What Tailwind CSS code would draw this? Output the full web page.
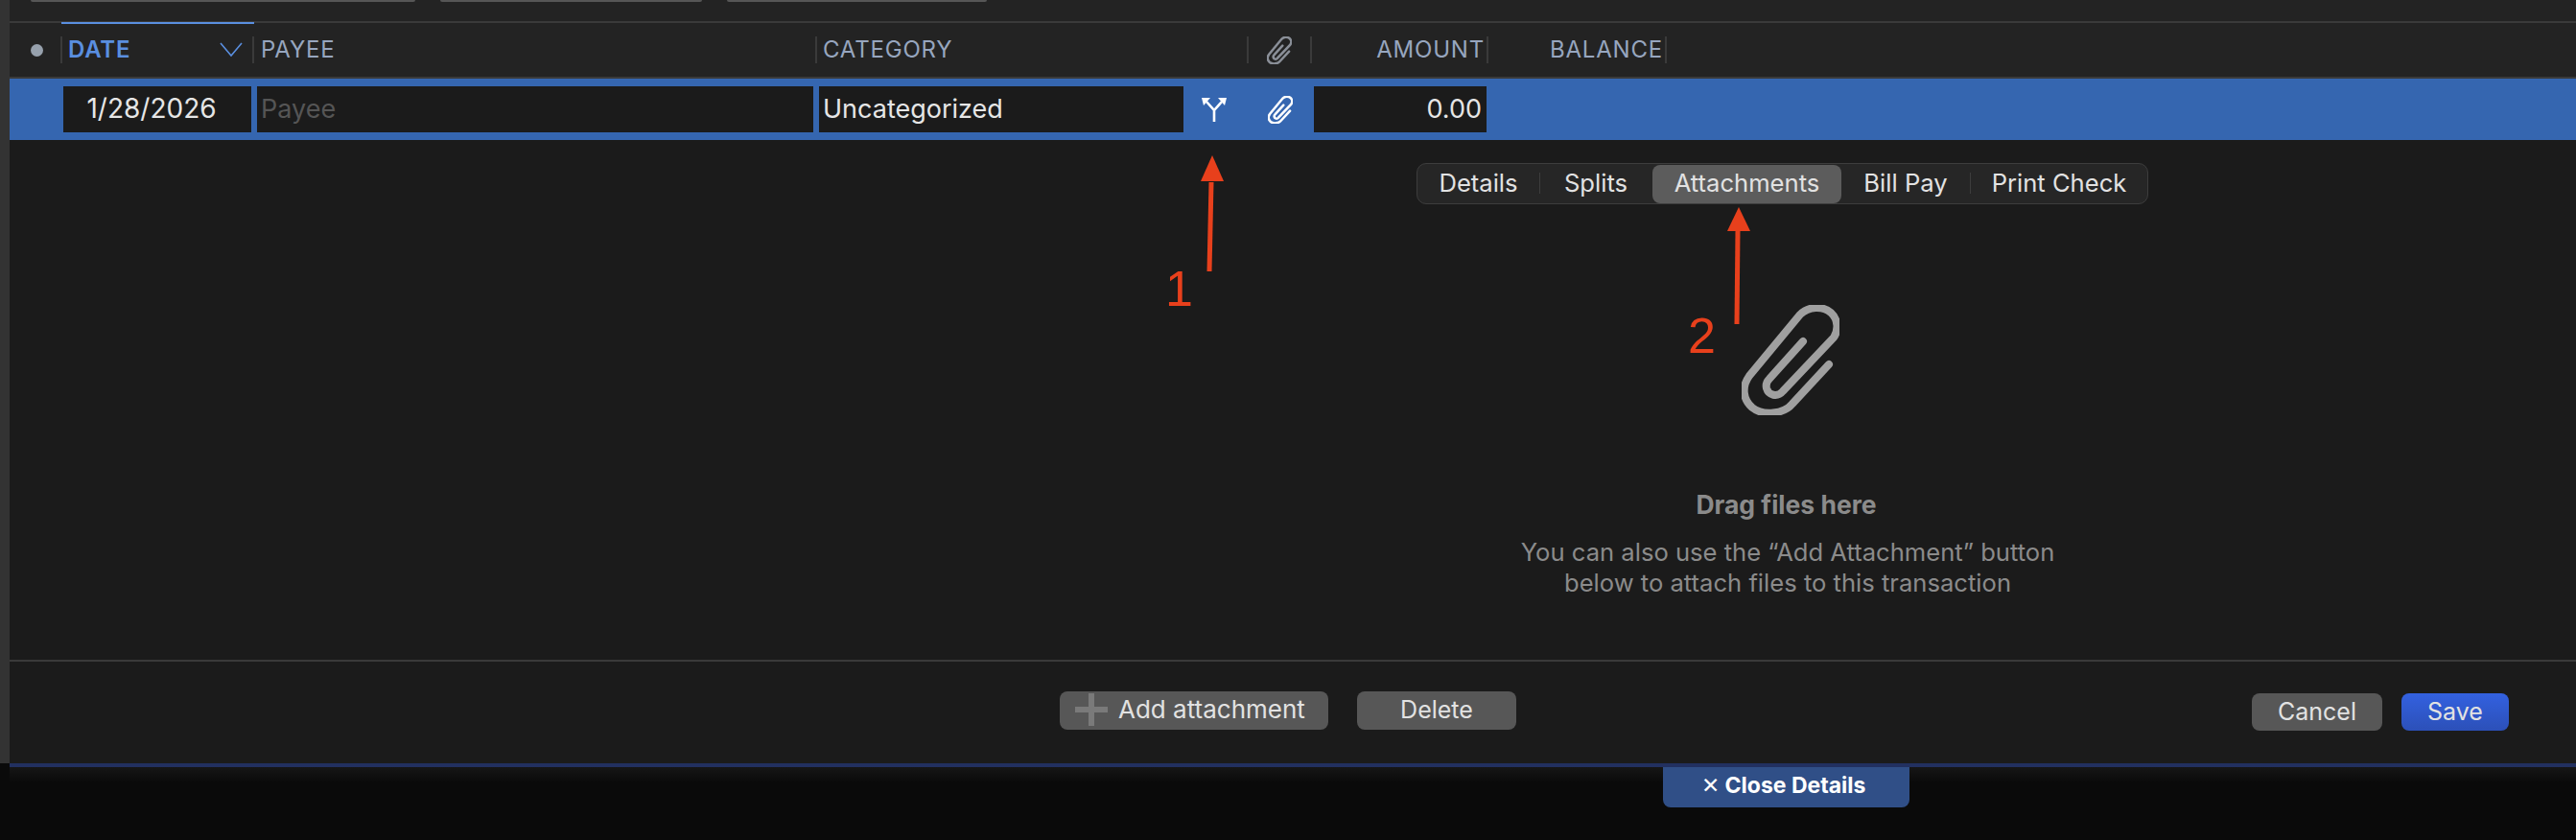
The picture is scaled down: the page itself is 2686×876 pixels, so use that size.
<!DOCTYPE html>
<html lang="en">
<head>
    <meta charset="UTF-8">
    <title>Attachments</title>
    <script src="https://cdn.jsdelivr.net/npm/@tailwindcss/browser@4"></script>
</head>
<body class="bg-[#0a0a0a] font-['Inter',sans-serif]">
    <div class="relative flex h-[876px] w-[2686px] overflow-hidden">
        <!-- window edge -->
        <div class="w-[10px] h-[796px] bg-[#333333] shrink-0"></div>

        <div class="flex-1 flex flex-col">
            <!-- toolbar buttons, cut off by the crop -->
            <div class="h-[22px] bg-[#232323] flex items-start pl-[22px]">
                <div class="w-[401px] h-[2px] bg-[#565656] rounded-b"></div>
                <div class="w-[273px] h-[2px] bg-[#565656] rounded-b ml-[26px]"></div>
                <div class="w-[271px] h-[2px] bg-[#565656] rounded-b ml-[26px]"></div>
            </div>

            <!-- column headers -->
            <div class="h-[60px] flex items-center bg-[#232323] border-y-2 border-[#3a3a3a] text-[24px] tracking-[0.8px] text-[#97a6bf] font-normal leading-none">
                <div class="w-[53px] flex justify-center pl-[4px]"><span class="w-[13px] h-[13px] rounded-full bg-[#97a1ad]"></span></div>
                <div class="relative w-[202px] h-[28px] border-x-2 border-[#3a3a3a] flex items-center justify-between pl-[6px] pr-[10px] text-[#5a8fe0] font-semibold">
                    <span class="absolute left-[-1px] right-[-2px] top-[-15px] h-[2px] bg-[#5a8fe0]"></span>
                    <span>DATE</span>
                    <svg width="24" height="16" viewBox="0 0 24 16" fill="none" stroke="#5a8fe0" stroke-width="1.6"><path d="M1 1l11 13L23 1"/></svg>
                </div>
                <div class="w-[585px] h-[28px] flex items-center pl-[7px]">PAYEE</div>
                <div class="w-[450px] h-[28px] flex items-center pl-[6px] border-l-2 border-[#3a3a3a]">CATEGORY</div>
                <div class="w-[66px] h-[28px] flex items-center justify-center border-l-2 border-[#3a3a3a]">
                    <svg width="26" height="29" viewBox="0 0 102 115" fill="none" stroke="#8a8f98" stroke-width="10" stroke-linecap="round"><path d="M91 62 L53 103 C44 114 22 116 11 107 C1 98 0 85 8 74 L61 10 C70 1 85 1 93 8 C101 15 101 27 96 34 L43 90 C37 97 28 94 26 87 C25 83 26 80 29 77 L64 38"/></svg>
                </div>
                <div class="w-[186px] h-[28px] flex items-center justify-end pr-[2px] border-x-2 border-[#3a3a3a]">AMOUNT</div>
                <div class="w-[186px] h-[28px] flex items-center justify-end pr-[2px] border-r-2 border-[#3a3a3a]">BALANCE</div>
            </div>

            <!-- edit row -->
            <div class="h-[64px] bg-[#3566b0] flex items-center text-[27px] text-[#e6e6e6] leading-none">
                <div class="ml-[56px] w-[196px] h-[48px] pb-[2px] bg-[#1b1b1b] flex items-center justify-center pr-[12px] text-[28px]">1/28/2026</div>
                <div class="ml-[6px] w-[580px] h-[48px] pb-[2px] bg-[#1b1b1b] flex items-center pl-[4px] text-[#555555]">Payee</div>
                <div class="ml-[6px] w-[380px] h-[48px] pb-[2px] bg-[#1b1b1b] flex items-center pl-[4px]">Uncategorized</div>
                <div class="w-[136px] flex items-center">
                    <svg class="ml-[19px]" width="26" height="25" viewBox="0 0 26 25" fill="none"><path d="M13 25V13L5 4M13 13l8-9" stroke="#fff" stroke-width="2.6"/><path d="M0 0h9L2 8zM26 0h-9l7 8z" fill="#fff"/></svg>
                    <svg class="ml-[43px]" width="26" height="29" viewBox="0 0 102 115" fill="none" stroke="#fff" stroke-width="10" stroke-linecap="round"><path d="M91 62 L53 103 C44 114 22 116 11 107 C1 98 0 85 8 74 L61 10 C70 1 85 1 93 8 C101 15 101 27 96 34 L43 90 C37 97 28 94 26 87 C25 83 26 80 29 77 L64 38"/></svg>
                </div>
                <div class="w-[180px] h-[48px] pb-[2px] bg-[#1b1b1b] flex items-center justify-end pr-[5px]">0.00</div>
            </div>

            <!-- details pane -->
            <div class="h-[542px] bg-[#1b1b1b] flex flex-col pt-[24px] text-[25.6px] leading-none">
                <div class="ml-[1467px] w-[763px] h-[43px] rounded-[10px] bg-[#262626] border border-[#3d3d3d] flex items-center text-[#e2e2e2] pb-[2px]">
                    <div class="w-[127px] flex justify-center">Details</div>
                    <div class="w-px h-[22px] bg-[#3d3d3d] mr-[2px]"></div>
                    <div class="w-[112px] flex justify-center">Splits</div>
                    <div class="relative w-[197px] h-[40px] flex items-center justify-center ml-[3px]"><span class="absolute left-0 top-[1px] w-full h-[40px] rounded-[8px] bg-[#5c5c5c]"></span><span class="relative">Attachments</span></div>
                    <div class="w-[134px] flex justify-center">Bill Pay</div>
                    <div class="w-px h-[22px] bg-[#3d3d3d]"></div>
                    <div class="flex-1 flex justify-center">Print Check</div>
                </div>
                <svg class="ml-[1806px] mt-[105px]" width="102" height="115" viewBox="0 0 102 115" fill="none" stroke="#a0a0a0" stroke-width="8" stroke-linecap="round"><path d="M91 62 L53 103 C44 114 22 116 11 107 C1 98 0 85 8 74 L61 10 C70 1 85 1 93 8 C101 15 101 27 96 34 L43 90 C37 97 28 94 26 87 C25 83 26 80 29 77 L64 38"/></svg>
                <div class="ml-[1454px] w-[800px] mt-[77px] text-center text-[#8b8b8b] leading-[32px]">
                    <p class="font-bold text-[26.5px] pr-[3px]">Drag files here</p>
                    <p class="mt-[18px]">You can also use the “Add Attachment” button</p>
                    <p>below to attach files to this transaction</p>
                </div>
            </div>

            <!-- footer buttons -->
            <div class="h-[108px] bg-[#1b1b1b] border-t-2 border-[#3a3a3a] flex items-start pt-[31px] text-[25px] leading-none text-[#e2e2e2]">
                <div class="ml-[1095px] w-[280px] h-[40px] pb-[2px] rounded-[8px] bg-[#575757] flex items-center pl-[16px]">
                    <svg width="34" height="34" viewBox="0 0 34 34" fill="#7a7a7a"><path d="M14 0h6v14h14v6H20v14h-6V20H0v-6h14z"/></svg>
                    <span class="ml-[11px] text-[26px]">Add attachment</span>
                </div>
                <div class="ml-[30px] w-[166px] h-[40px] pb-[2px] rounded-[8px] bg-[#575757] flex items-center justify-center">Delete</div>
                <div class="ml-[767px] mt-[2px] w-[136px] h-[39px] rounded-[8px] bg-[#575757] flex items-center justify-center">Cancel</div>
                <div class="ml-[20px] mt-[2px] w-[112px] h-[39px] rounded-[8px] bg-gradient-to-b from-[#3361e0] to-[#2c50b8] flex items-center justify-center">Save</div>
            </div>

            <!-- bottom strip -->
            <div class="h-[4px] bg-[#223060]"></div>
            <div class="flex-1 bg-gradient-to-b from-[#161616] to-[#0a0a0a] to-[16px]">
                <div class="ml-[1724px] w-[257px] h-[42px] pb-[3px] pr-[6px] rounded-b-[8px] bg-[#304f87] flex items-center justify-center text-white font-bold text-[23px] leading-none"><span class="font-normal mr-[6px]">✕</span>Close Details</div>
            </div>
        </div>

        <!-- annotations drawn on top of the screenshot -->
        <svg class="absolute left-0 top-0" width="2686" height="876" fill="none">
            <path d="M1261 283L1263 190" stroke="#e8401c" stroke-width="5"/>
            <path d="M1264 162l-12 27h24z" fill="#e8401c"/>
            <path d="M1811 338L1812 240" stroke="#e8401c" stroke-width="5"/>
            <path d="M1813 216l-12 25h24z" fill="#e8401c"/>
        </svg>
        <span class="absolute left-[1215px] top-[271px] font-['Liberation_Sans',sans-serif] text-[52px] leading-[60px] text-[#e8401c]">1</span>
        <span class="absolute left-[1760px] top-[320px] font-['Liberation_Sans',sans-serif] text-[52px] leading-[60px] text-[#e8401c]">2</span>
    </div>
</body>
</html>
